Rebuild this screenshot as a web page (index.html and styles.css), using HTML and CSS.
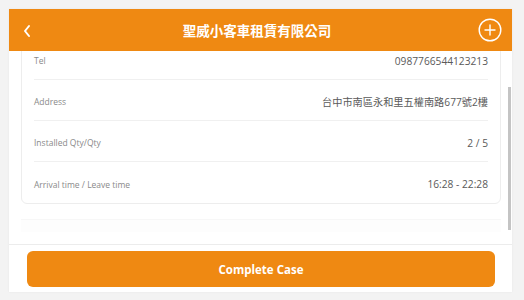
FILE: index.html
```html
<!DOCTYPE html>
<html>
<head>
  <title>Case Detail</title>
  <link rel="stylesheet" href="styles.css">
</head>
<body>
  <div class="panel">
    <div class="header">
      <svg class="back" width="10" height="14" viewBox="0 0 10 14">
        <path d="M7 2 L3 7 L7 12" fill="none" stroke="#fff" stroke-width="2" stroke-linecap="round" stroke-linejoin="round"/>
      </svg>
      <h1 class="title">聖威小客車租賃有限公司</h1>
      <svg class="add" width="24" height="24" viewBox="0 0 24 24">
        <circle cx="12" cy="12" r="10.8" fill="none" stroke="#fff" stroke-width="1.4"/>
        <path d="M12 7 V17 M7 12 H17" stroke="#fff" stroke-width="1.4" stroke-linecap="round"/>
      </svg>
    </div>

    <div class="scroll">
      <div class="card">
        <div class="row">
          <span class="label">Tel</span>
          <span class="value">0987766544123213</span>
        </div>
        <div class="row">
          <span class="label">Address</span>
          <span class="value">台中市南區永和里五權南路677號2樓</span>
        </div>
        <div class="row">
          <span class="label">Installed Qty/Qty</span>
          <span class="value">2 / 5</span>
        </div>
        <div class="row">
          <span class="label">Arrival time / Leave time</span>
          <span class="value">16:28 - 22:28</span>
        </div>
      </div>
      <div class="spacer"></div>
      <div class="scrollbar"></div>
    </div>

    <div class="footer">
      <button class="complete">Complete Case</button>
    </div>
  </div>
</body>
</html>
```

FILE: styles.css
```css
body {
  margin: 0;
  background-color: #f3f3f3;
  font-family: "Open Sans", "Noto Sans CJK TC", sans-serif;
}

.panel {
  margin: 9px 12px 8px 9px;
  height: 283px;
  background-color: #fff;
  display: flex;
  flex-direction: column;
  box-shadow: 0 0 2px rgba(0, 0, 0, 0.06);
}

.header {
  height: 42px;
  flex-shrink: 0;
  background-color: #ef8912;
  display: flex;
  align-items: center;
  padding: 2px 10px 0 13px;
  box-sizing: border-box;
}

.back {
  display: block;
}

.title {
  flex: 1;
  margin: 0 0 2px 4px;
  text-align: center;
  color: #fff;
  font-size: 13.5px;
  font-weight: bold;
  font-family: "Noto Sans CJK TC", sans-serif;
}

.add {
  display: block;
  margin-bottom: 2px;
}

.scroll {
  flex: 1;
  overflow: hidden;
  position: relative;
  padding: 0 11px 0 12px;
}

.card {
  margin-top: -13px;
  border: 1px solid #ededed;
  border-radius: 6px;
  padding: 0 12px;
}

.row {
  height: 41px;
  display: flex;
  align-items: center;
  justify-content: space-between;
  border-bottom: 1px solid #f0f0f0;
  padding-top: 3px;
  box-sizing: border-box;
}

.row:last-child {
  border-bottom: none;
}

.label {
  color: #8a8a8a;
  font-size: 8.5px;
}

.value {
  color: #5a5a5a;
  font-size: 10.2px;
}

.spacer {
  margin-top: 15px;
  height: 12px;
  background-color: #fdfdfd;
  border-top: 1px solid #f7f7f7;
}

.scrollbar {
  position: absolute;
  right: 1px;
  top: 36px;
  width: 3px;
  height: 143px;
  background-color: #c4c4c4;
}

.footer {
  flex-shrink: 0;
  border-top: 1px solid #ececec;
  padding: 6px 17px 5px 18px;
}

.complete {
  width: 100%;
  height: 36px;
  border: none;
  border-radius: 6px;
  background-color: #ef8912;
  color: #fff;
  font-family: "Open Sans", sans-serif;
  font-size: 11.5px;
  font-weight: bold;
}
```
